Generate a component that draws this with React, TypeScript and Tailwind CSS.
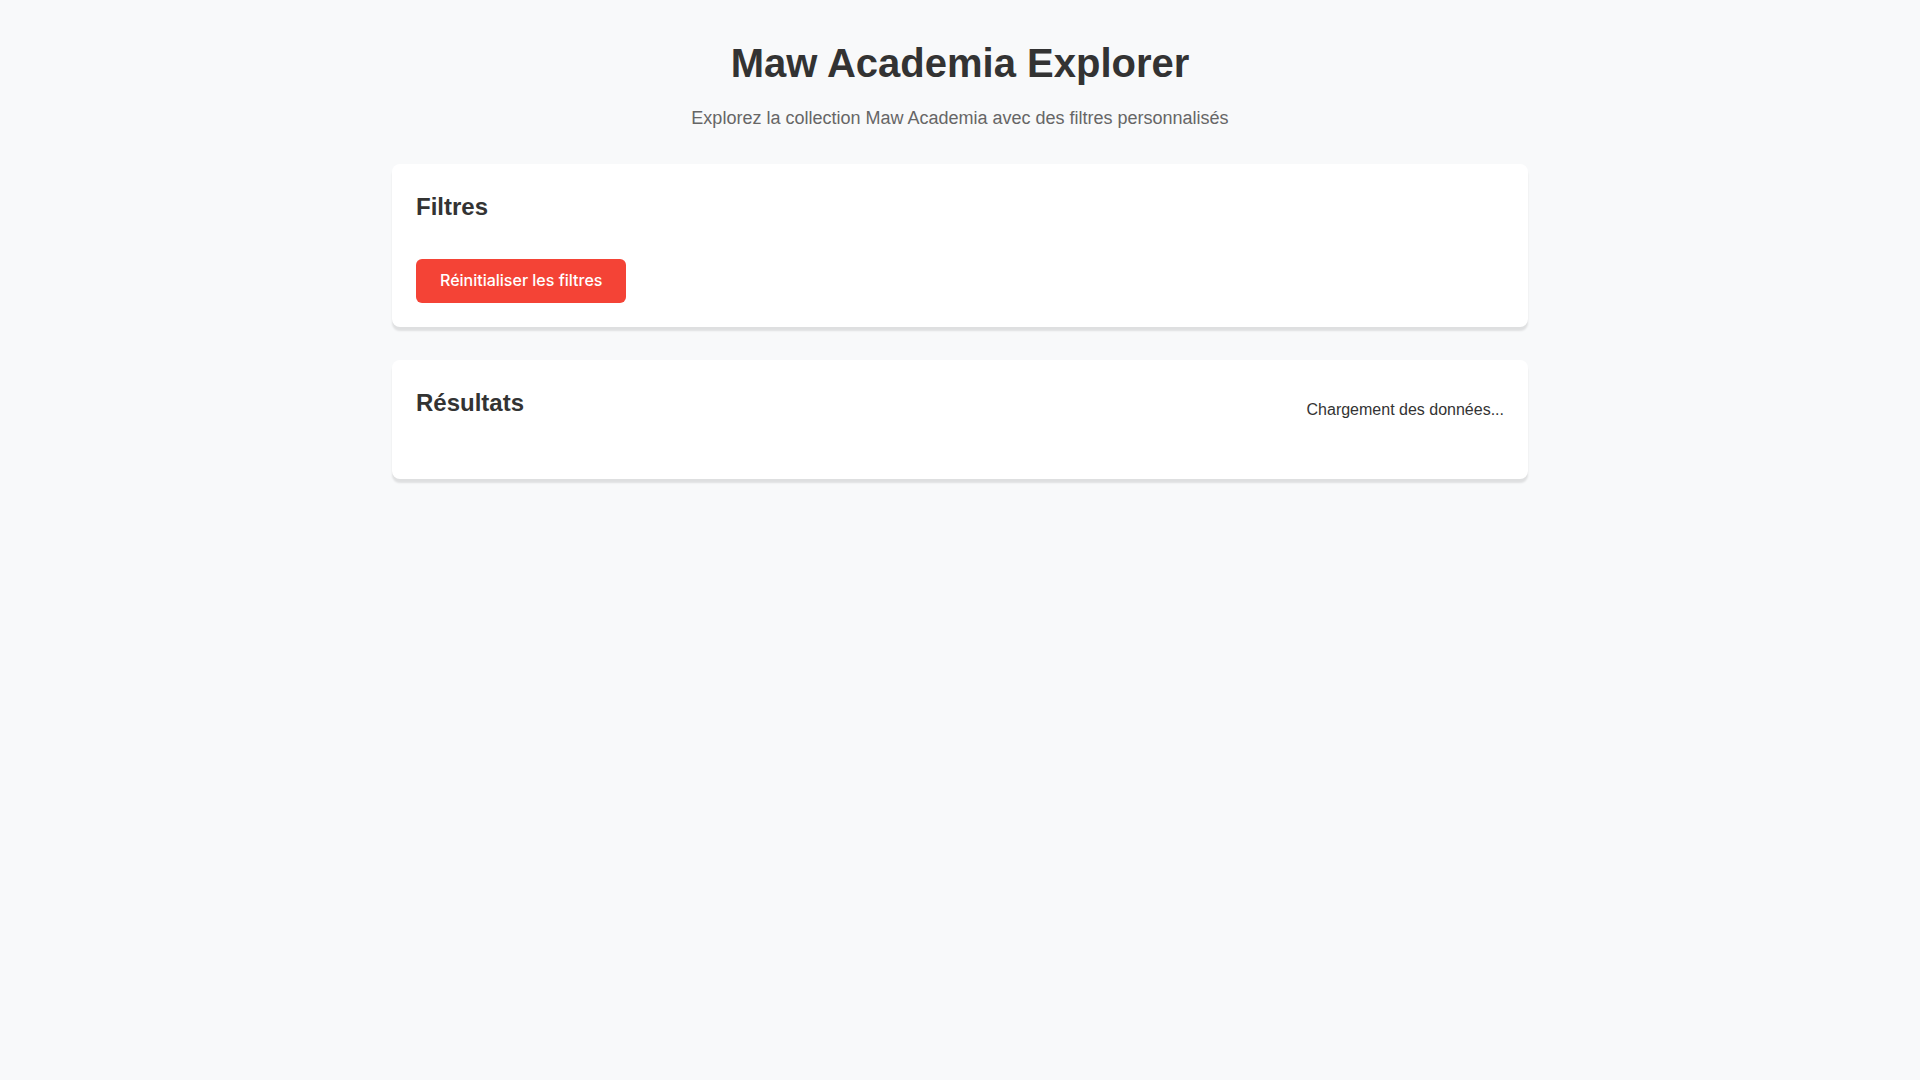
import React from "react";

export default function App() {
  return (
    <div className="min-h-screen w-full bg-[#f8f9fa] font-['Liberation_Sans',Arial,sans-serif] text-[#333]">
      <div className="mx-auto max-w-[1200px] px-8 pt-[40px]">
        <header className="text-center">
          <h1 className="text-[40px] font-bold leading-[46px] text-[#333]">Maw Academia Explorer</h1>
          <p className="mt-[22px] text-[18px] leading-[21px] text-[#666]">
            Explorez la collection Maw Academia avec des filtres personnalisés
          </p>
        </header>

        <section className="mt-[35px] rounded-lg bg-white px-6 pt-[29px] pb-6 shadow-[0_4px_2px_rgba(0,0,0,0.1)]">
          <h2 className="text-2xl font-bold leading-[28px] text-[#333]">Filtres</h2>
          <button
            type="button"
            className="mt-[38px] rounded-md bg-[#f44336] px-6 py-3 font-['Inter',sans-serif] text-base font-medium leading-[19.6px] text-white"
          >
            Réinitialiser les filtres
          </button>
        </section>

        <section className="mt-[33px] rounded-lg bg-white px-6 pt-[29px] pb-6 shadow-[0_4px_2px_rgba(0,0,0,0.1)]">
          <div className="flex items-start justify-between">
            <h2 className="text-2xl font-bold leading-[28px] text-[#333]">Résultats</h2>
            <p className="mt-[12px] text-base leading-[18.4px] text-[#333]">Chargement des données...</p>
          </div>
          <div className="h-[36px]" />
        </section>
      </div>
    </div>
  );
}
